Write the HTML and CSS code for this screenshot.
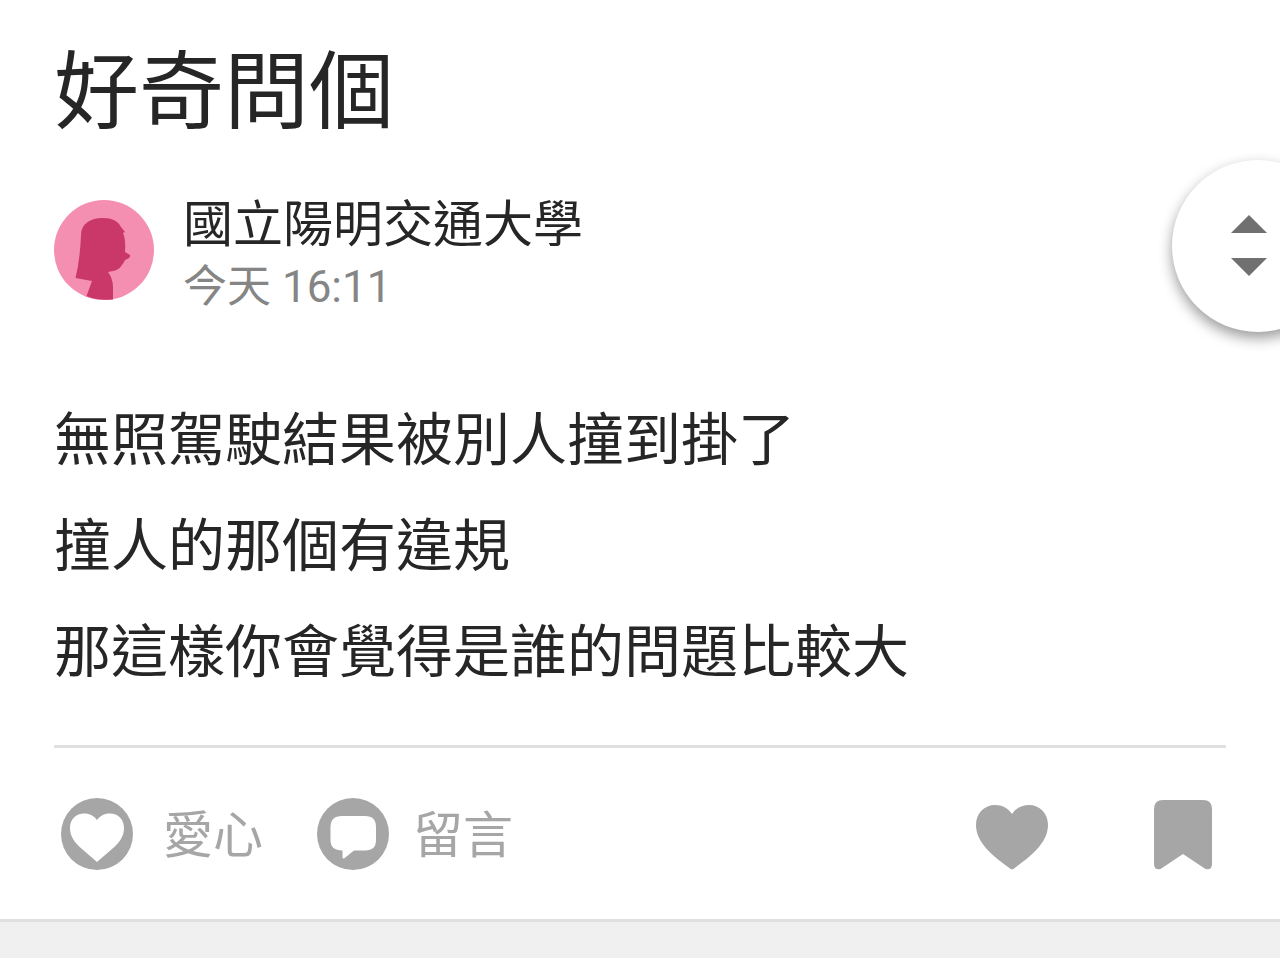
FILE: index.html
```
<!DOCTYPE html>
<html lang="zh-Hant">
<head>
  <meta charset="UTF-8">
  <meta name="viewport" content="width=device-width, initial-scale=1.0">
  <title>好奇問個</title>
  <link rel="stylesheet" href="styles.css">
</head>
<body>

  <article class="post">
    <h1 class="title">好奇問個</h1>

    <header class="author">
      <svg class="avatar" viewBox="0 0 100 100" aria-hidden="true">
        <circle cx="50" cy="50" r="50" fill="#f48fb1"/>
        <path d="M27 35C27 24 36 18 49 18C58 18 64 21 67 27L71 32L69 33Q72 40 71 52L76 55Q77 58 71 60C68 66 65 70 59 71L54 72Q59 79 59 87V99.500Q44 101 32.500 96L38 81L21.500 78Q26 60 27 35Z" fill="#c93868"/>
      </svg>
      <div class="author-info">
        <div class="school">國立陽明交通大學</div>
        <time class="time" datetime="16:11">今天 16:11</time>
      </div>
    </header>

    <div class="content">
      <p>無照駕駛結果被別人撞到掛了</p>
      <p>撞人的那個有違規</p>
      <p>那這樣你會覺得是誰的問題比較大</p>
    </div>

    <footer class="actions">
      <button class="action" type="button">
        <svg class="icon-love" viewBox="0 0 78 72" aria-hidden="true">
          <circle cx="36" cy="36" r="36" fill="#a6a6a6"/>
          <path d="M36 64L21 51C13 44 9 38 9 30C9 21 15 15.500 23 15.500C29 15.500 33 18 36 22C39 18 43 15.500 49 15.500C57 15.500 63 21 63 30C63 38 59 44 51 51Z" fill="#fff"/>
        </svg>
        <span>愛心</span>
      </button>
      <button class="action" type="button">
        <svg class="icon-comment" viewBox="0 0 72 72" aria-hidden="true">
          <circle cx="36" cy="36" r="36" fill="#a6a6a6"/>
          <path d="M25 18H48Q59 18 59 29V42Q59 52.500 48 52.500H37L27 60.500Q25.500 61 25.500 59V52.500Q13.500 52.500 13.500 42V29Q13.500 18 25 18Z" fill="#fff"/>
        </svg>
        <span>留言</span>
      </button>

      <div class="action-right">
        <button class="action" type="button" aria-label="愛心">
          <svg class="icon-heart" viewBox="0 0 72 72" aria-hidden="true">
            <path d="M36 71.500Q34.500 71 32 69C14 56 0 43 0 27C0 15 8.500 7 19 7C26 7 32 10 36 16C40 10 46 7 53 7C63.500 7 72 15 72 27C72 43 58 56 40 69Q37.500 71 36 71.500Z" fill="#a6a6a6"/>
          </svg>
        </button>
        <button class="action" type="button" aria-label="收藏">
          <svg class="icon-save" viewBox="0 0 58 72" aria-hidden="true">
            <path d="M9 2H49Q58 2 58 11V66Q58 72.500 51.500 71L29 56L6.500 71Q0 72.500 0 66V11Q0 2 9 2Z" fill="#a6a6a6"/>
          </svg>
        </button>
      </div>
    </footer>
  </article>

  <div class="below"></div>

  <button class="scroll-btn" type="button" aria-label="捲動">
    <svg class="icon-scroll" viewBox="0 0 36 62" aria-hidden="true">
      <path d="M18 0L36 18H0ZM0 43H36L18 61Z" fill="#707070"/>
    </svg>
  </button>

</body>
</html>
```
FILE: styles.css
```
* {
  box-sizing: border-box;
}

body {
  margin: 0;
  min-height: 100vh;
  display: flex;
  flex-direction: column;
  overflow-x: hidden;
  background: #ffffff;
  color: #262626;
  font-family: Roboto, "Noto Sans CJK TC", sans-serif;
}

.post {
  padding: 33px 54px 0;
}

.title {
  margin: 0;
  font-size: 85px;
  line-height: 120px;
  font-weight: 400;
}

.author {
  display: flex;
  align-items: flex-start;
  gap: 29px;
  margin-top: 40px;
}

.avatar {
  width: 100px;
  height: 100px;
  margin-top: 7px;
  flex-shrink: 0;
}

.school {
  font-size: 50px;
  line-height: 64px;
}

.time {
  display: block;
  font-size: 44px;
  line-height: 60px;
  color: #858585;
}

.content {
  margin-top: 71px;
  font-size: 57px;
  line-height: 106px;
}

.content p {
  margin: 0;
}

.actions {
  display: flex;
  align-items: center;
  gap: 54px;
  height: 174px;
  margin-top: 39px;
  padding: 0 14px 0 7px;
  border-top: 3px solid #e0e0e0;
}

.action {
  display: flex;
  align-items: center;
  gap: 24px;
  padding: 0;
  border: none;
  background: none;
  color: #a6a6a6;
  font-family: inherit;
  font-size: 50px;
  line-height: 72px;
  cursor: pointer;
}

.action span {
  padding-top: 4px;
}

.action svg {
  height: 72px;
}

.icon-love {
  width: 78px;
}

.icon-comment,
.icon-heart {
  width: 72px;
}

.icon-save {
  width: 58px;
}

.action-right {
  display: flex;
  gap: 106px;
  margin-left: auto;
}

/* Gap before the next section */
.below {
  flex: 1;
  border-top: 3px solid #e0e0e0;
  background: #f0f0f0;
}

/* Floating button, half tucked behind the right edge */
.scroll-btn {
  position: fixed;
  top: 160px;
  right: -64px;
  display: flex;
  align-items: center;
  justify-content: center;
  width: 172px;
  height: 172px;
  padding: 0 18px 0 0;
  border: none;
  border-radius: 50%;
  background: #ffffff;
  box-shadow: 0 6px 14px rgba(0, 0, 0, 0.4);
  cursor: pointer;
}

.icon-scroll {
  width: 36px;
  height: 62px;
}
```
